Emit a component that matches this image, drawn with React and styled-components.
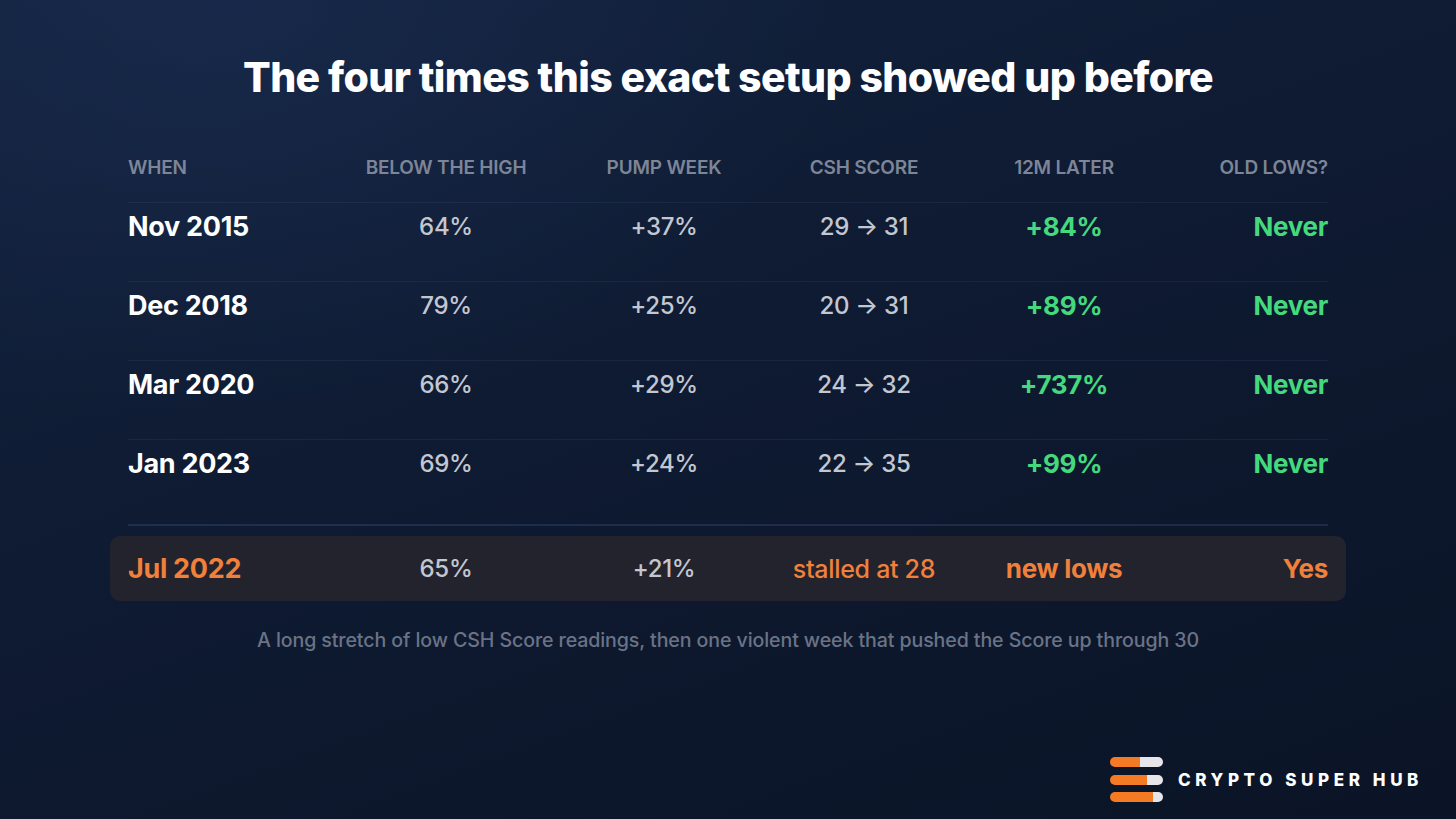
import React from "react";
import styled, { createGlobalStyle } from "styled-components";

const GlobalStyle = createGlobalStyle`
  html, body {
    margin: 0;
    padding: 0;
  }
  body {
    font-family: Inter, "Noto Sans", "Liberation Sans", sans-serif;
    background: #0c1629;
  }
`;

const Page = styled.div`
  width: 1456px;
  height: 819px;
  box-sizing: border-box;
  position: relative;
  overflow: hidden;
  background:
    radial-gradient(ellipse 900px 600px at 15% 0%, rgba(30, 50, 90, 0.45), transparent 70%),
    linear-gradient(160deg, #13223e 0%, #0e1a31 50%, #0b1426 100%);
  display: flex;
  flex-direction: column;
  align-items: center;
  padding-top: 52px;
`;

const Title = styled.h1`
  margin: 0;
  color: #ffffff;
  font-size: 41px;
  font-weight: 800;
  letter-spacing: -0.6px;
  line-height: 50px;
`;

const Table = styled.div`
  width: 1200px;
  margin-top: 40px;
  display: flex;
  flex-direction: column;
`;

const cols = "200px 236px 200px 200px 200px 164px";

const HeadRow = styled.div`
  display: grid;
  grid-template-columns: ${cols};
  align-items: center;
  height: 50px;
  padding-bottom: 10px;
`;

const HeadCell = styled.div`
  color: #7d8596;
  font-size: 19px;
  font-weight: 600;
  letter-spacing: -0.2px;
  text-transform: uppercase;
  text-align: ${(p) => p.$align || "center"};
`;

const Row = styled.div`
  display: grid;
  grid-template-columns: ${cols};
  align-items: center;
  border-top: 1px solid rgba(120, 150, 200, 0.09);
  padding: 10px 0 40px;
  line-height: 28px;
`;

const Divider = styled.div`
  height: 2px;
  background: rgba(90, 120, 170, 0.22);
  margin-top: 6px;
`;

const Highlight = styled.div`
  display: grid;
  grid-template-columns: ${cols};
  align-items: center;
  margin: 10px -18px 0;
  padding: 0 18px;
  height: 65px;
  border-radius: 10px;
  background: #23232e;
  line-height: 28px;
`;

const tones = {
  date: { color: "#ffffff", weight: 700, size: 27 },
  value: { color: "#c3c7d0", weight: 500, size: 24 },
  good: { color: "#45d97e", weight: 700, size: 26 },
  bad: { color: "#f0803a", weight: 700, size: 26 },
  badDate: { color: "#f0803a", weight: 700, size: 27 },
  badSoft: { color: "#f0803a", weight: 500, size: 25 },
};

const Cell = styled.div`
  font-size: ${(p) => tones[p.$tone].size}px;
  letter-spacing: -0.3px;
  color: ${(p) => tones[p.$tone].color};
  font-weight: ${(p) => tones[p.$tone].weight};
  text-align: ${(p) => p.$align || "center"};
  white-space: nowrap;
`;

const Caption = styled.p`
  margin: 27px 0 0;
  color: #6a7386;
  font-size: 19.6px;
  font-weight: 500;
  letter-spacing: -0.1px;
`;

const Brand = styled.div`
  position: absolute;
  right: 33px;
  bottom: 17px;
  display: flex;
  align-items: center;
  gap: 15px;
`;

const Bars = styled.div`
  display: flex;
  flex-direction: column;
  gap: 7.5px;
`;

const Bar = styled.div`
  width: 53px;
  height: 10px;
  border-radius: 5px;
  background: linear-gradient(
    90deg,
    #f47a24 0,
    #f47a24 ${(p) => p.$fill}px,
    #e6e6ea ${(p) => p.$fill}px
  );
`;

const BrandName = styled.span`
  color: #ffffff;
  font-size: 17px;
  font-weight: 800;
  letter-spacing: 4.6px;
`;

const rows = [
  ["Nov 2015", "64%", "+37%", "29 → 31", "+84%", "Never"],
  ["Dec 2018", "79%", "+25%", "20 → 31", "+89%", "Never"],
  ["Mar 2020", "66%", "+29%", "24 → 32", "+737%", "Never"],
  ["Jan 2023", "69%", "+24%", "22 → 35", "+99%", "Never"],
];

const headers = ["When", "Below the high", "Pump week", "CSH score", "12M later", "Old lows?"];

export default function App() {
  return (
    <>
      <GlobalStyle />
      <Page>
        <Title>The four times this exact setup showed up before</Title>
        <Table>
          <HeadRow>
            {headers.map((h, i) => (
              <HeadCell key={h} $align={i === 0 ? "left" : i === 5 ? "right" : "center"}>
                {h}
              </HeadCell>
            ))}
          </HeadRow>
          {rows.map((r) => (
            <Row key={r[0]}>
              <Cell $tone="date" $align="left">{r[0]}</Cell>
              <Cell $tone="value">{r[1]}</Cell>
              <Cell $tone="value">{r[2]}</Cell>
              <Cell $tone="value">{r[3]}</Cell>
              <Cell $tone="good">{r[4]}</Cell>
              <Cell $tone="good" $align="right">{r[5]}</Cell>
            </Row>
          ))}
          <Divider />
          <Highlight>
            <Cell $tone="badDate" $align="left">Jul 2022</Cell>
            <Cell $tone="value">65%</Cell>
            <Cell $tone="value">+21%</Cell>
            <Cell $tone="badSoft">stalled at 28</Cell>
            <Cell $tone="bad">new lows</Cell>
            <Cell $tone="bad" $align="right">Yes</Cell>
          </Highlight>
        </Table>
        <Caption>
          A long stretch of low CSH Score readings, then one violent week that pushed the Score up through 30
        </Caption>
        <Brand>
          <Bars>
            <Bar $fill={30} />
            <Bar $fill={37} />
            <Bar $fill={43} />
          </Bars>
          <BrandName>CRYPTO SUPER HUB</BrandName>
        </Brand>
      </Page>
    </>
  );
}
